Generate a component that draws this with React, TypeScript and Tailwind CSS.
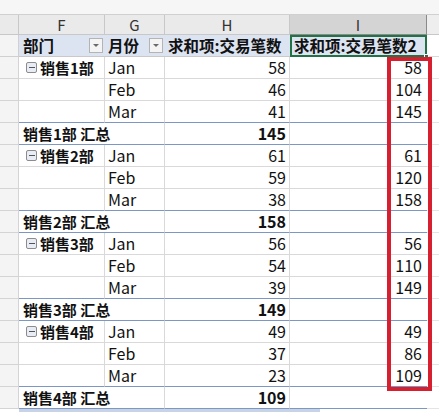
import React from 'react';

type Row =
  | { kind: 'item'; dept?: string; month: string; h: number; i: number; last: boolean }
  | { kind: 'total'; label: string; h: number };

const groups = [
  { dept: '销售1部', vals: [58, 46, 41], cum: [58, 104, 145], total: 145 },
  { dept: '销售2部', vals: [61, 59, 38], cum: [61, 120, 158], total: 158 },
  { dept: '销售3部', vals: [56, 54, 39], cum: [56, 110, 149], total: 149 },
  { dept: '销售4部', vals: [49, 37, 23], cum: [49, 86, 109], total: 109 },
];

const months = ['Jan', 'Feb', 'Mar'];

const rows: Row[] = groups.flatMap((g) => [
  ...months.map((m, k) => ({
    kind: 'item' as const,
    dept: k === 0 ? g.dept : undefined,
    month: m,
    h: g.vals[k],
    i: g.cum[k],
    last: k === 2,
  })),
  { kind: 'total' as const, label: `${g.dept} 汇总`, h: g.total },
]);

const cols = 'grid grid-cols-[19px_86px_60px_125px_137px_12px]';

function Dropdown() {
  return (
    <span className="flex h-[15px] w-[14px] shrink-0 items-center justify-center border border-[#b4b4b4] bg-[#f4f4f4]">
      <span className="h-0 w-0 border-x-[3px] border-t-[3px] border-x-transparent border-t-[#6a6a6a]" />
    </span>
  );
}

function Minus() {
  return (
    <span className="mr-[3px] flex h-[11px] w-[11px] shrink-0 items-center justify-center rounded-[2px] border border-[#8c8c8c] bg-[#e8ecf4]">
      <span className="h-px w-[6px] bg-[#555]" />
    </span>
  );
}

export default function App() {
  return (
    <div
      className="relative h-[412px] w-[439px] overflow-hidden bg-white text-[16px] text-[#111]"
      style={{ fontFamily: '"Noto Sans CJK SC", "Liberation Sans", sans-serif' }}
    >
      {/* strip above column letters */}
      <div className="h-[15px] border-b border-[#d0d0d0] bg-[#f6f6f6]" />

      {/* column letters */}
      <div className={`${cols} h-[20px] text-[15px] leading-[19px] text-[#333]`}>
        <div className="border-r border-b border-[#c8c8c8] bg-[#eaeaea]" />
        <div className="border-r border-b border-[#c8c8c8] bg-[#eaeaea] text-center">F</div>
        <div className="border-r border-b border-[#c8c8c8] bg-[#eaeaea] text-center">G</div>
        <div className="border-r border-b border-[#c8c8c8] bg-[#eaeaea] text-center">H</div>
        <div className="border-r border-b border-[#8a8a8a] bg-[#d4d4d4] text-center">I</div>
        <div className="border-b border-[#c8c8c8] bg-[#eeeeee]" />
      </div>

      {/* pivot header */}
      <div className={`${cols} h-[22px] text-[15.5px] font-bold leading-[21px]`}>
        <div className="border-r border-b border-[#d0d0d0] bg-[#f4f4f4]" />
        <div className="flex items-center justify-between border-b border-[#c9c9c9] bg-[#dce4f2] pl-[4px] pr-[2px]">
          <span>部门</span>
          <Dropdown />
        </div>
        <div className="flex items-center justify-between border-b border-[#c9c9c9] bg-[#dce4f2] pl-[3px] pr-[2px]">
          <span>月份</span>
          <Dropdown />
        </div>
        <div className="border-b border-[#c9c9c9] bg-[#dce4f2] pl-[3px] whitespace-nowrap">求和项:交易笔数</div>
        <div className="relative border-2 border-[#217346] bg-[#dce4f2] pl-[2px] leading-[17px] whitespace-nowrap">
          求和项:交易笔数2
          <span className="absolute -right-[4px] -bottom-[4px] h-[5px] w-[5px] border border-white bg-[#217346]" />
        </div>
        <div className="border-b border-[#d9d9d9]" />
      </div>

      {/* data */}
      {rows.map((r, idx) =>
        r.kind === 'item' ? (
          <div key={idx} className={`${cols} h-[22px] leading-[21px]`}>
            <div className="border-r border-b border-[#d4d4d4] bg-[#f4f4f4]" />
            <div
              className={`flex items-center border-r border-b pl-[7px] text-[15px] font-bold whitespace-nowrap ${
                r.last ? 'border-b-[#7d97c4] border-r-[#d9d9d9]' : 'border-[#d9d9d9]'
              }`}
            >
              {r.dept && (
                <>
                  <Minus />
                  {r.dept}
                </>
              )}
            </div>
            <div className={`border-r border-b pl-[3px] ${r.last ? 'border-b-[#7d97c4] border-r-[#d9d9d9]' : 'border-[#d9d9d9]'}`}>
              {r.month}
            </div>
            <div className={`border-r border-b pr-[3px] text-right ${r.last ? 'border-b-[#7d97c4] border-r-[#d9d9d9]' : 'border-[#d9d9d9]'}`}>
              {r.h}
            </div>
            <div className={`border-b pr-[5px] text-right ${r.last ? 'border-[#7d97c4]' : 'border-[#d9d9d9]'}`}>{r.i}</div>
            <div className="border-b border-[#e4e4e4]" />
          </div>
        ) : (
          <div key={idx} className={`${cols} h-[22px] font-bold leading-[21px]`}>
            <div className="border-r border-b border-[#d4d4d4] bg-[#f4f4f4]" />
            <div className="col-span-2 border-r border-b border-r-[#d9d9d9] border-b-[#7d97c4] pl-[4px] text-[15px] whitespace-nowrap">
              {r.label}
            </div>
            <div className="border-r border-b border-r-[#d9d9d9] border-b-[#7d97c4] pr-[3px] text-right">{r.h}</div>
            <div className="border-b border-[#7d97c4]" />
            <div className="border-b border-[#e4e4e4]" />
          </div>
        ),
      )}

      <div className="ml-[19px] h-[3px] w-[301px] bg-[#c9d3e6]" />

      {/* red highlight */}
      <div className="pointer-events-none absolute left-[387px] top-[57px] h-[334px] w-[45px] border-[4px] border-[#d6202f]" />
    </div>
  );
}
